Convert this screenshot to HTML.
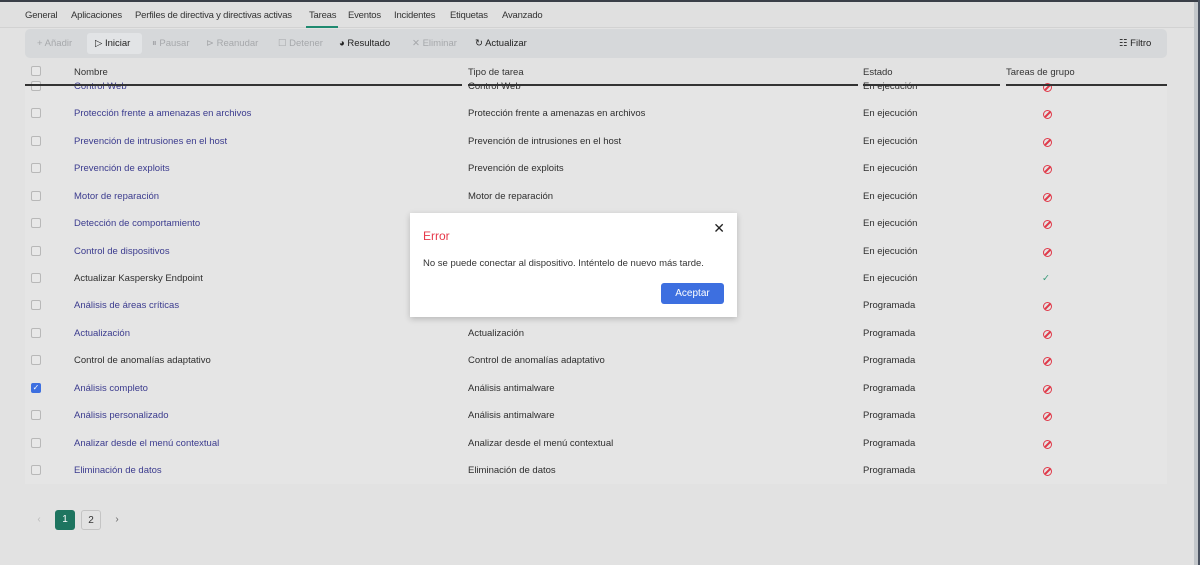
<!DOCTYPE html>
<html><head><meta charset="utf-8"><style>
*{box-sizing:border-box;margin:0;padding:0}
body{width:1200px;height:565px;overflow:hidden;background:#e2e2e2;font-family:"Liberation Sans",sans-serif;font-size:10px;color:#2e2e2e;position:relative}
.top{position:absolute;left:0;top:0;width:1200px;height:2px;background:#3a3f48}
.tabs{position:absolute;left:0;top:2px;width:1194px;height:26px;border-bottom:1px solid #d2d2d2;background:#e0e0e0}
.tab{position:absolute;top:8px;font-size:9.5px;color:#333;letter-spacing:-0.2px;white-space:nowrap}
.ul{position:absolute;left:306px;top:24px;width:32px;height:2px;background:#1f8a70}
.tb{position:absolute;left:25px;top:29px;width:1142px;height:29px;background:#d6d8da;border-radius:5px}
.tb span{position:absolute;top:9px;font-size:9.5px;white-space:nowrap}
.dis{color:#a6a8ab}
.hd{position:absolute;top:67px;font-size:9.5px;color:#333}
.line{position:absolute;top:84px;height:2px;background:#333}
.tbl{position:absolute;left:25px;top:86px;width:1142px;height:398px;background:#e5e5e5}
.cb{position:absolute;left:31px;width:10px;height:10px;border:1px solid #b8b8b8;border-radius:2px;background:#e8e8e8}
.r{position:absolute;font-size:9.5px;white-space:nowrap}
.lk{color:#3b3b8e}
.no{position:absolute;left:1043px;width:9px;height:9px;border:1.5px solid #e03a4a;border-radius:50%}
.no:after{content:"";position:absolute;left:2.5px;top:-1px;width:1.5px;height:8px;background:#e03a4a;transform:rotate(45deg)}
.sb{position:absolute;left:1194px;top:2px;width:4px;height:563px;background:#c3c7cb}
.sb2{position:absolute;left:1198px;top:0;width:2px;height:565px;background:#4a5260}
.dlg{position:absolute;left:410px;top:213px;width:327px;height:104px;background:#fff;box-shadow:0 2px 6px rgba(0,0,0,.2)}
.pg{position:absolute;top:510px;width:20px;height:20px;border-radius:3px;text-align:center;line-height:20px;font-size:10px}
</style></head><body>
<div class="top"></div>
<div class="tabs">
<span class="tab" style="left:25px">General</span>
<span class="tab" style="left:71px">Aplicaciones</span>
<span class="tab" style="left:135px">Perfiles de directiva y directivas activas</span>
<span class="tab" style="left:309px">Tareas</span>
<span class="tab" style="left:348px">Eventos</span>
<span class="tab" style="left:394px">Incidentes</span>
<span class="tab" style="left:450px">Etiquetas</span>
<span class="tab" style="left:502px">Avanzado</span>
<div class="ul"></div>
</div>
<div class="tb">
<span class="dis" style="left:12px">+ Añadir</span>
<div style="position:absolute;left:62px;top:4px;width:55px;height:21px;background:#e2e4e6;border-radius:3px"></div>
<span style="left:70px;color:#222">▷ Iniciar</span>
<span class="dis" style="left:127px">⏸ Pausar</span>
<span class="dis" style="left:181px">⊳ Reanudar</span>
<span class="dis" style="left:253px">☐ Detener</span>
<span style="left:314px;color:#222">◕ Resultado</span>
<span class="dis" style="left:387px">✕ Eliminar</span>
<span style="left:450px;color:#222">↻ Actualizar</span>
<span style="left:1094px;color:#222">☷ Filtro</span>
</div>
<div class="cb" style="top:66px"></div>
<span class="hd" style="left:74px">Nombre</span>
<span class="hd" style="left:468px">Tipo de tarea</span>
<span class="hd" style="left:863px">Estado</span>
<span class="hd" style="left:1006px">Tareas de grupo</span>
<div class="tbl"></div>
<div id="rows"></div>
<div class="line" style="left:25px;width:437px"></div>
<div class="line" style="left:468px;width:390px"></div>
<div class="line" style="left:863px;width:137px"></div>
<div class="line" style="left:1006px;width:161px"></div>
<script>
var R=[["Control Web","Control Web","En ejecución",1,0],
["Protección frente a amenazas en archivos","Protección frente a amenazas en archivos","En ejecución",1,0],
["Prevención de intrusiones en el host","Prevención de intrusiones en el host","En ejecución",1,0],
["Prevención de exploits","Prevención de exploits","En ejecución",1,0],
["Motor de reparación","Motor de reparación","En ejecución",1,0],
["Detección de comportamiento","Detección de comportamiento","En ejecución",1,0],
["Control de dispositivos","Control de dispositivos","En ejecución",1,0],
["Actualizar Kaspersky Endpoint","Actualizar Kaspersky Endpoint","En ejecución",0,1],
["Análisis de áreas críticas","Análisis de áreas críticas","Programada",1,0],
["Actualización","Actualización","Programada",1,0],
["Control de anomalías adaptativo","Control de anomalías adaptativo","Programada",0,0],
["Análisis completo","Análisis antimalware","Programada",1,0],
["Análisis personalizado","Análisis antimalware","Programada",1,0],
["Analizar desde el menú contextual","Analizar desde el menú contextual","Programada",1,0],
["Eliminación de datos","Eliminación de datos","Programada",1,0]];
var h="";
R.forEach(function(r,i){var y=Math.round(80+i*27.43);
h+='<div class="cb" style="top:'+(y+1)+'px'+(i==11?';background:#3d6fe0;border-color:#3d6fe0;color:#fff;font-size:8px;line-height:8px;text-align:center':'')+'">'+(i==11?'✓':'')+'</div>';
h+='<span class="r'+(r[3]?' lk':'')+'" style="left:74px;top:'+(y+1)+'px">'+r[0]+'</span>';
h+='<span class="r" style="left:468px;top:'+(y+1)+'px">'+r[1]+'</span>';
h+='<span class="r" style="left:863px;top:'+(y+1)+'px">'+r[2]+'</span>';
if(r[4])h+='<span class="r" style="left:1042px;top:'+(y+1)+'px;color:#3a9a7a">✓</span>';
else h+='<div class="no" style="top:'+(y+3)+'px"></div>';});
document.getElementById("rows").innerHTML=h;
</script>
<div class="pg" style="left:29px;color:#bbb">‹</div>
<div class="pg" style="left:55px;background:#1e7560;color:#fff">1</div>
<div class="pg" style="left:81px;border:1px solid #c4c4c4;color:#333">2</div>
<div class="pg" style="left:107px;color:#666">›</div>
<div class="sb"></div><div class="sb2"></div>
<div class="dlg">
<div style="position:absolute;left:13px;top:16px;font-size:12px;color:#e6394a">Error</div>
<div style="position:absolute;right:12px;top:7px;font-size:14px;color:#222">✕</div>
<div style="position:absolute;left:13px;top:45px;font-size:9.5px;color:#333">No se puede conectar al dispositivo. Inténtelo de nuevo más tarde.</div>
<div style="position:absolute;left:251px;top:70px;width:63px;height:21px;background:#3d6fe0;border-radius:3px;color:#fff;text-align:center;line-height:21px;font-size:10px">Aceptar</div>
</div>
</body></html>
